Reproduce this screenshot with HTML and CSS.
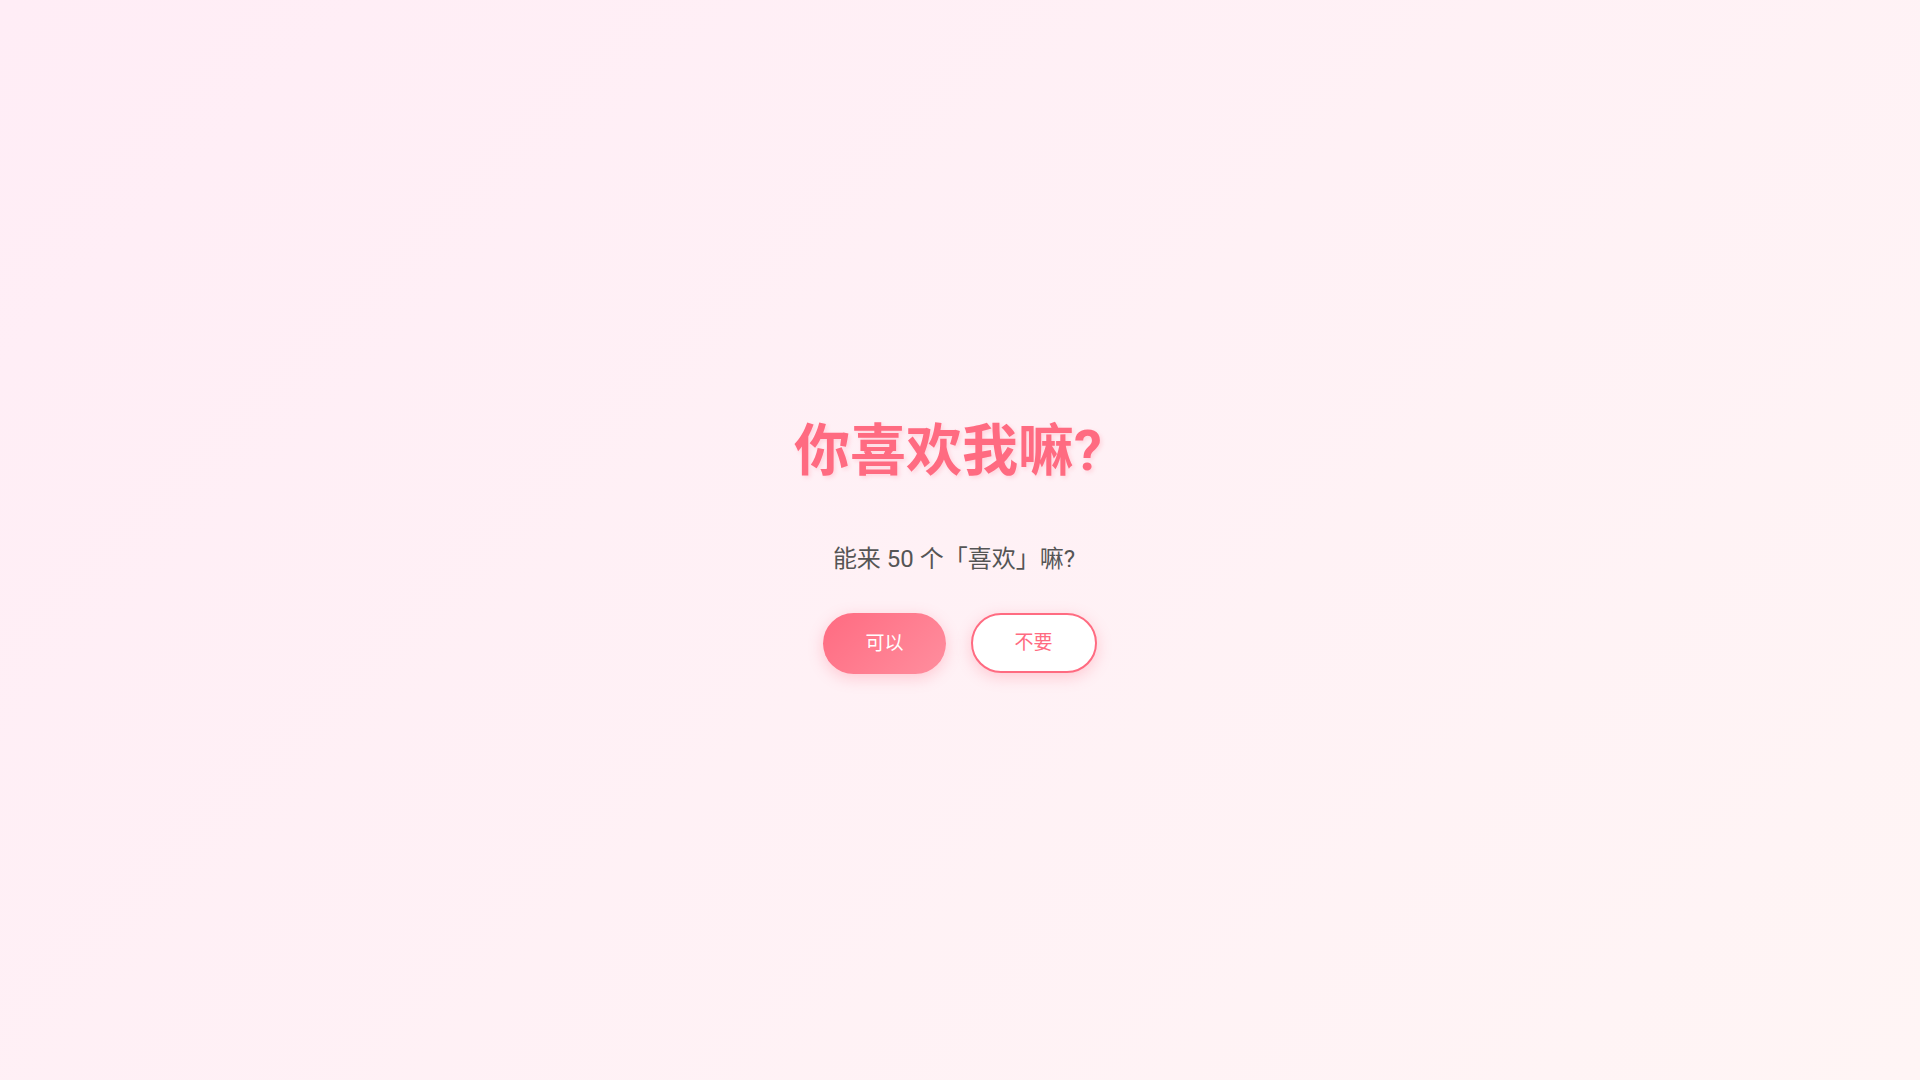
FILE: index.html
```html
<!DOCTYPE html>
<html lang="zh-CN">
<head>
<meta charset="UTF-8">
<title>你喜欢我嘛?</title>
<link rel="stylesheet" href="styles.css">
</head>
<body>
  <main class="stage">
    <h1 class="question">你喜欢我嘛?</h1>
    <p class="prompt">能来 50 个「喜欢」嘛?</p>
    <div class="actions">
      <button class="btn btn-yes" type="button">可以</button>
      <button class="btn btn-no" type="button">不要</button>
    </div>
  </main>
</body>
</html>
```
FILE: styles.css
```css
* {
  box-sizing: border-box;
}

html, body {
  margin: 0;
  height: 100%;
}

body {
  font-family: Roboto, "Noto Sans CJK SC", sans-serif;
  background: linear-gradient(135deg, #ffedf6 0%, #fff5f5 100%);
  color: #555;
}

.stage {
  height: 100%;
  padding-top: 12px;
  display: flex;
  flex-direction: column;
  align-items: center;
  justify-content: center;
  text-align: center;
}

.question {
  margin: 0 0 58px;
  padding-right: 24px;
  font-size: 56px;
  line-height: 1.2;
  font-weight: 700;
  color: #ff6b81;
  text-shadow: 2px 2px 4px rgba(255, 107, 129, 0.2);
}

.prompt {
  margin: 0 0 36px;
  padding-right: 12px;
  font-size: 24px;
  line-height: 1.4;
  color: #555;
}

.actions {
  display: flex;
  gap: 25px;
  align-items: center;
}

.btn {
  font-family: inherit;
  font-size: 19px;
  line-height: 29px;
  border-radius: 999px;
  cursor: pointer;
  box-shadow: 0 4px 15px rgba(255, 107, 129, 0.3);
}

.btn-yes {
  padding: 16px 42px;
  border: none;
  color: #fff;
  background: linear-gradient(135deg, #ff6b81 0%, #ff8e9e 100%);
}

.btn-no {
  padding: 14px 42px;
  line-height: 28px;
  border: 2px solid #ff6b81;
  color: #ff6b81;
  background: #fff;
}
```
